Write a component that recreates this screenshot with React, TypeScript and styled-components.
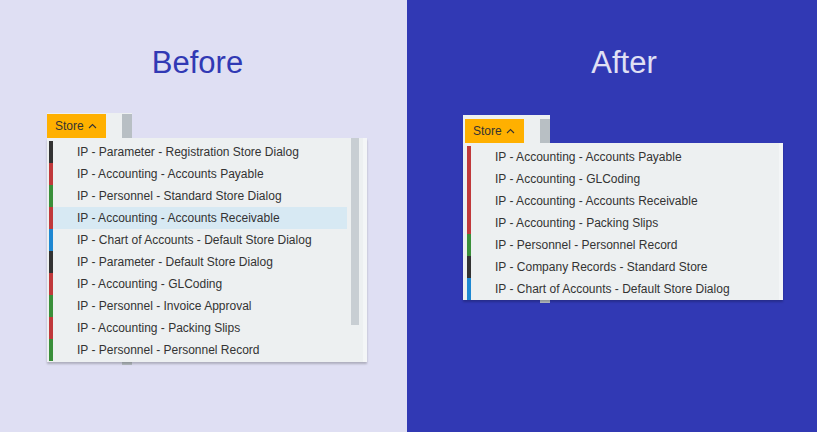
import React from "react";
import styled, { createGlobalStyle } from "styled-components";

const Global = createGlobalStyle`
  html, body { margin: 0; padding: 0; }
  body { font-family: "Liberation Sans", Arial, sans-serif; }
`;

const Page = styled.div`
  display: flex;
  width: 817px;
  height: 432px;
  overflow: hidden;
`;

const Panel = styled.section<{ $bg: string; $w: string }>`
  box-sizing: border-box;
  width: ${(p) => p.$w};
  flex: ${(p) => (p.$w === "auto" ? "1" : "none")};
  background: ${(p) => p.$bg};
  padding-top: 47px;
  display: flex;
  flex-direction: column;
`;

const Title = styled.h1<{ $color: string; $shift: number }>`
  margin: 0;
  font-family: "Liberation Sans", Arial, sans-serif;
  font-weight: 400;
  font-size: 31px;
  line-height: 31px;
  color: ${(p) => p.$color};
  text-align: center;
  padding-left: ${(p) => Math.max(0, p.$shift * 2)}px;
  padding-right: ${(p) => Math.max(0, -p.$shift * 2)}px;
`;

const Widget = styled.div<{ $left: number; $top: number; $stripLeft: number }>`
  position: relative;
  margin-left: ${(p) => p.$left}px;
  margin-top: ${(p) => p.$top}px;
  width: 320px;
  &::before {
    content: "";
    position: absolute;
    top: 0;
    bottom: -3px;
    left: ${(p) => p.$stripLeft}px;
    width: 10px;
    background: #b8bfc4;
  }
`;

const Header = styled.div<{ $padTop: number; $padLeft: number; $w: number }>`
  position: relative;
  z-index: 1;
  display: flex;
  width: ${(p) => p.$w}px;
  box-sizing: border-box;
  padding: ${(p) => p.$padTop}px 0 0 ${(p) => p.$padLeft}px;
  background: #edf0f1;
`;

const StoreButton = styled.button`
  display: flex;
  align-items: center;
  gap: 4px;
  height: 24px;
  width: 59px;
  box-sizing: border-box;
  padding: 0 0 0 8px;
  border: none;
  background: #ffb000;
  font-family: "Liberation Sans", Arial, sans-serif;
  font-size: 12px;
  color: #333333;
  cursor: pointer;
`;

const GrayBlock = styled.div`
  margin-left: auto;
  width: 10px;
  background: #b8bfc4;
`;

const List = styled.div<{ $height: number; $padLeft: number }>`
  position: relative;
  z-index: 1;
  display: flex;
  box-sizing: border-box;
  width: 320px;
  height: ${(p) => p.$height}px;
  padding: 3px 0 0 ${(p) => p.$padLeft}px;
  background: #edf0f1;
  border-right: 4px solid #f4f6f7;
  box-shadow: 0 2px 2px rgba(0, 0, 0, 0.22);
  overflow: hidden;
`;

const Rows = styled.ul`
  flex: 1;
  margin: 0;
  padding: 0;
  list-style: none;
`;

const Row = styled.li<{ $bar: string; $active?: boolean }>`
  height: 22px;
  display: flex;
  align-items: center;
  border-left: 4px solid ${(p) => p.$bar};
  padding-left: 24px;
  background: ${(p) => (p.$active ? "#d7e9f3" : "transparent")};
  font-family: "Liberation Sans", Arial, sans-serif;
  font-size: 12px;
  color: #333333;
  white-space: nowrap;
`;

const Track = styled.div`
  width: 8px;
  margin: -3px 4px 0 4px;
`;

const Thumb = styled.div`
  height: 187px;
  background: #c8ced3;
`;

const COLORS: Record<string, string> = {
  dark: "#333333",
  red: "#c0393b",
  green: "#3a8f3a",
  blue: "#1e88d2",
};

type Item = { text: string; c: string; active?: boolean };

const before: Item[] = [
  { text: "IP - Parameter - Registration Store Dialog", c: "dark" },
  { text: "IP - Accounting - Accounts Payable", c: "red" },
  { text: "IP - Personnel - Standard Store Dialog", c: "green" },
  { text: "IP - Accounting - Accounts Receivable", c: "red", active: true },
  { text: "IP - Chart of Accounts - Default Store Dialog", c: "blue" },
  { text: "IP - Parameter - Default Store Dialog", c: "dark" },
  { text: "IP - Accounting - GLCoding", c: "red" },
  { text: "IP - Personnel - Invoice Approval", c: "green" },
  { text: "IP - Accounting - Packing Slips", c: "red" },
  { text: "IP - Personnel - Personnel Record", c: "green" },
];

const after: Item[] = [
  { text: "IP - Accounting - Accounts Payable", c: "red" },
  { text: "IP - Accounting - GLCoding", c: "red" },
  { text: "IP - Accounting - Accounts Receivable", c: "red" },
  { text: "IP - Accounting - Packing Slips", c: "red" },
  { text: "IP - Personnel - Personnel Record", c: "green" },
  { text: "IP - Company Records - Standard Store", c: "dark" },
  { text: "IP - Chart of Accounts - Default Store Dialog", c: "blue" },
];

const Chevron = () => (
  <svg width="9" height="6" viewBox="0 0 9 6" fill="none">
    <polyline points="1,5 4.5,1.5 8,5" stroke="#333" strokeWidth="1.1" />
  </svg>
);

export default function App() {
  return (
    <>
      <Global />
      <Page>
        <Panel $bg="#dfdff3" $w="407px">
          <Title $color="#3139b4" $shift={-6}>Before</Title>
          <Widget $left={47} $top={35} $stripLeft={75}>
            <Header $padTop={1} $padLeft={0} $w={85}>
              <StoreButton>
                Store <Chevron />
              </StoreButton>
              <GrayBlock />
            </Header>
            <List $height={224} $padLeft={2}>
              <Rows>
                {before.map((it) => (
                  <Row key={it.text} $bar={COLORS[it.c]} $active={it.active}>
                    {it.text}
                  </Row>
                ))}
              </Rows>
              <Track>
                <Thumb />
              </Track>
            </List>
          </Widget>
        </Panel>
        <Panel $bg="#3139b4" $w="auto">
          <Title $color="#e0e0f4" $shift={12}>After</Title>
          <Widget $left={56} $top={37} $stripLeft={77}>
            <Header $padTop={4} $padLeft={2} $w={87}>
              <StoreButton>
                Store <Chevron />
              </StoreButton>
              <GrayBlock />
            </Header>
            <List $height={157} $padLeft={4}>
              <Rows>
                {after.map((it) => (
                  <Row key={it.text} $bar={COLORS[it.c]}>
                    {it.text}
                  </Row>
                ))}
              </Rows>
            </List>
          </Widget>
        </Panel>
      </Page>
    </>
  );
}
